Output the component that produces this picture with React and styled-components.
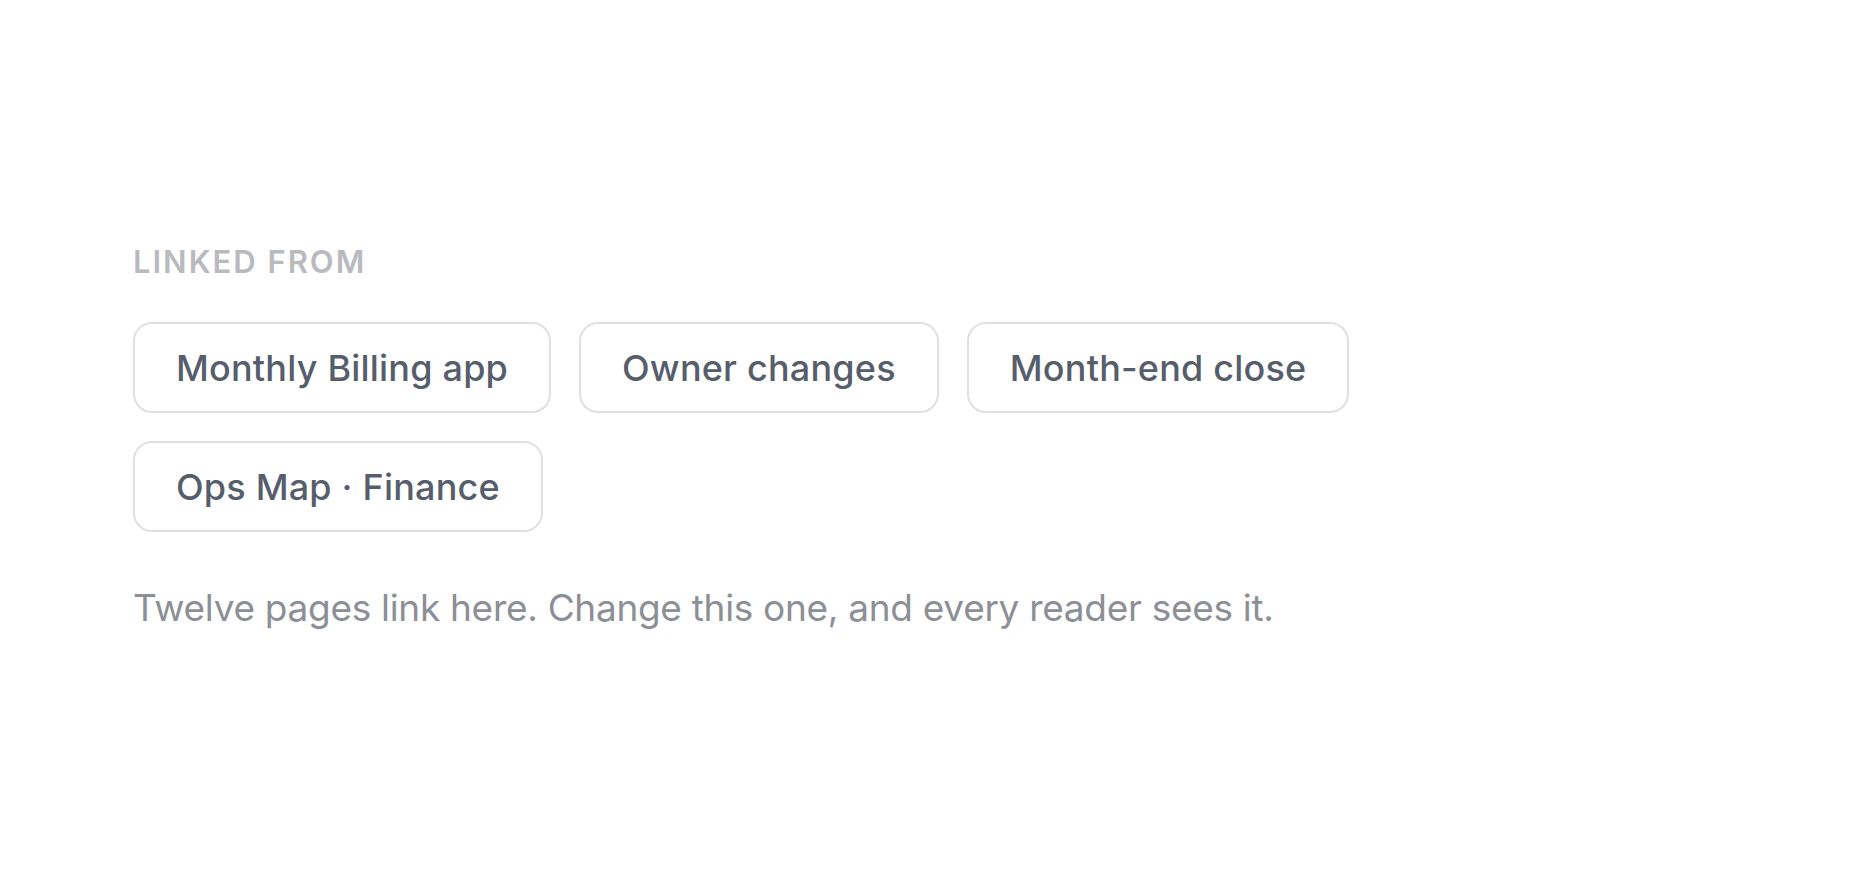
import React from "react";
import styled, { createGlobalStyle } from "styled-components";

const GlobalStyle = createGlobalStyle`
  html, body {
    margin: 0;
    padding: 0;
    background: #ffffff;
  }
  body {
    font-family: Inter, "Noto Sans", sans-serif;
    -webkit-font-smoothing: antialiased;
  }
`;

const Page = styled.main`
  min-height: 870px;
  box-sizing: border-box;
  padding: 243px 0 0 133px;
`;

const Section = styled.section`
  display: flex;
  flex-direction: column;
  align-items: flex-start;
`;

const Label = styled.h3`
  margin: 0;
  font-size: 31px;
  line-height: 37px;
  font-weight: 600;
  letter-spacing: 2px;
  text-transform: uppercase;
  color: #b9babe;
`;

const ChipList = styled.div`
  display: flex;
  flex-wrap: wrap;
  gap: 28px;
  margin-top: 42px;
  max-width: 1240px;
`;

const Chip = styled.a`
  display: inline-flex;
  align-items: center;
  box-sizing: border-box;
  height: 91px;
  padding: 0 41px;
  border: 2px solid #dfe0e2;
  border-radius: 19px;
  background: #ffffff;
  color: #575e6b;
  font-size: 36px;
  font-weight: 500;
  letter-spacing: 0.2px;
  text-decoration: none;
  white-space: nowrap;
`;

const Note = styled.p`
  margin: 47px 0 0;
  font-size: 37px;
  line-height: 57px;
  font-weight: 400;
  letter-spacing: -0.3px;
  color: #8c8f95;
`;

const links = [
  "Monthly Billing app",
  "Owner changes",
  "Month-end close",
  "Ops Map · Finance",
];

export default function App() {
  return (
    <>
      <GlobalStyle />
      <Page>
        <Section>
          <Label>Linked from</Label>
          <ChipList>
            {links.map((name) => (
              <Chip key={name} href="#">
                {name}
              </Chip>
            ))}
          </ChipList>
          <Note>Twelve pages link here. Change this one, and every reader sees it.</Note>
        </Section>
      </Page>
    </>
  );
}
